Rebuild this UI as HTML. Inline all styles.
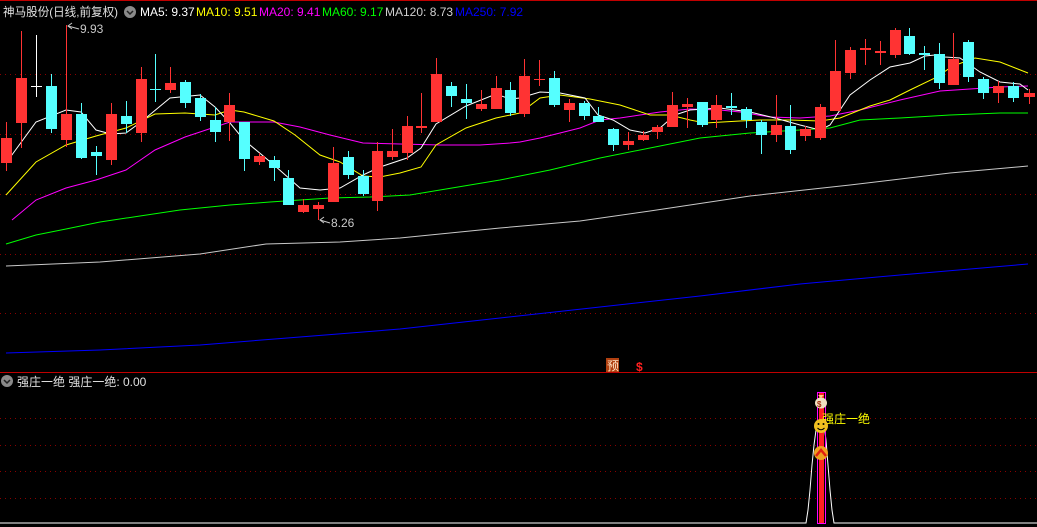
<!DOCTYPE html>
<html><head><meta charset="utf-8"><style>
html,body{margin:0;padding:0;background:#000;width:1037px;height:527px;overflow:hidden}
svg{display:block}
text{font-family:"Liberation Sans","Noto Sans CJK SC",sans-serif}
</style></head><body>
<svg width="1037" height="527" viewBox="0 0 1037 527" xmlns="http://www.w3.org/2000/svg">
<rect width="1037" height="527" fill="#000"/>
<line x1="0" y1="0.5" x2="1037" y2="0.5" stroke="#c00000"/>
<g stroke="#8a0000" stroke-dasharray="1,4">
<line x1="0" y1="74.5" x2="1037" y2="74.5"/><line x1="0" y1="134.5" x2="1037" y2="134.5"/><line x1="0" y1="194.5" x2="1037" y2="194.5"/><line x1="0" y1="254.5" x2="1037" y2="254.5"/><line x1="0" y1="313.5" x2="1037" y2="313.5"/>
<line x1="0" y1="418.5" x2="1037" y2="418.5"/><line x1="0" y1="445.5" x2="1037" y2="445.5"/><line x1="0" y1="471.5" x2="1037" y2="471.5"/><line x1="0" y1="498.5" x2="1037" y2="498.5"/>
</g>
<line x1="0" y1="372.5" x2="1037" y2="372.5" stroke="#c00000"/>

<g fill="none" stroke-width="1">
<polyline stroke="#0000ff" points="6,353 100,350 200,345 300,337 400,329 500,318 600,307 700,296 800,284 900,275 1028,264"/>
<polyline stroke="#c8c8c8" points="6,266 100,262 200,254 266,244 340,242 400,238 500,228 580,221 650,211 750,196 850,185 950,173 1028,166"/>
<polyline stroke="#00ff00" points="6,244 36,235 66,229 100,222 140,216 180,210 230,205 270,202 300,200 330,198 370,197 410,195 440,190 470,185 500,180 520,176 550,170 600,158 650,148 700,138 750,133 800,130 830,128 860,120 900,118 950,115 1000,113 1028,113"/>
<polyline stroke="#ff00ff" points="12,220 36,200 66,188 96,180 126,170 155,150 185,137 215,127 230,122 250,122 274,122 300,127 330,135 363,143 400,144 440,145 480,145 510,143 520,142 540,138 560,133 580,128 600,120 620,118 640,115 660,112 690,109 720,110 740,112 770,117 800,118 830,116 860,110 900,100 940,91 970,89 1000,87 1028,86"/>
<polyline stroke="#ffff00" points="6,195 36,162 66,145 96,136 126,128 155,114 185,113 215,115 230,110 244,112 274,121 295,135 320,155 340,162 363,176 380,177 400,173 421,167 436,145 466,128 496,118 520,113 540,98 560,95 590,99 620,105 650,115 670,115 690,120 705,123 740,121 760,120 790,120 820,121 840,118 870,106 890,100 910,90 935,78 953,66 975,58 1000,62 1028,73"/>
<polyline stroke="#ffffff" points="6,163 36,122 66,110 81,112 96,130 111,134 126,133 141,122 170,98 200,95 215,107 230,123 244,140 274,165 300,188 320,190 340,188 363,175 380,167 407,158 421,148 436,124 466,106 496,94 510,99 520,98 540,92 560,93 585,98 598,115 613,120 630,130 645,133 660,128 675,115 690,110 720,108 750,112 775,118 800,125 820,130 830,125 850,95 870,80 890,67 910,63 925,56 935,55 945,57 960,58 980,72 1000,82 1020,84 1028,90"/>
</g>

<g fill="#ff3333" stroke="#ff3333">
<line x1="6.5" y1="122" x2="6.5" y2="171"/><rect x="1" y="138" width="11" height="25" stroke="none"/>
<line x1="21.5" y1="31" x2="21.5" y2="148"/><rect x="16" y="78" width="11" height="45" stroke="none"/>
<line x1="66.5" y1="25" x2="66.5" y2="147"/><rect x="61" y="114" width="11" height="26" stroke="none"/>
<line x1="111.5" y1="103" x2="111.5" y2="165"/><rect x="106" y="114" width="11" height="46" stroke="none"/>
<line x1="141.5" y1="67" x2="141.5" y2="142"/><rect x="136" y="79" width="11" height="54" stroke="none"/>
<line x1="170.5" y1="67" x2="170.5" y2="93"/><rect x="165" y="83" width="11" height="7" stroke="none"/>
<line x1="229.5" y1="93" x2="229.5" y2="141"/><rect x="224" y="105" width="11" height="17" stroke="none"/>
<line x1="259.5" y1="153" x2="259.5" y2="165"/><rect x="254" y="156" width="11" height="6" stroke="none"/>
<line x1="303.5" y1="199" x2="303.5" y2="213"/><rect x="298" y="205" width="11" height="7" stroke="none"/>
<line x1="318.5" y1="202" x2="318.5" y2="220"/><rect x="313" y="205" width="11" height="4" stroke="none"/>
<line x1="333.5" y1="147" x2="333.5" y2="202"/><rect x="328" y="163" width="11" height="39" stroke="none"/>
<line x1="377.5" y1="142" x2="377.5" y2="211"/><rect x="372" y="151" width="11" height="50" stroke="none"/>
<line x1="392.5" y1="129" x2="392.5" y2="160"/><rect x="387" y="151" width="11" height="6" stroke="none"/>
<line x1="407.5" y1="116" x2="407.5" y2="160"/><rect x="402" y="126" width="11" height="27" stroke="none"/>
<line x1="421.5" y1="93" x2="421.5" y2="133"/><rect x="416" y="126" width="11" height="2" stroke="none"/>
<line x1="436.5" y1="58" x2="436.5" y2="122"/><rect x="431" y="74" width="11" height="48" stroke="none"/>
<line x1="481.5" y1="90" x2="481.5" y2="111"/><rect x="476" y="104" width="11" height="5" stroke="none"/>
<line x1="496.5" y1="76" x2="496.5" y2="109"/><rect x="491" y="88" width="11" height="21" stroke="none"/>
<line x1="524.5" y1="59" x2="524.5" y2="117"/><rect x="519" y="76" width="11" height="38" stroke="none"/>
<line x1="539.5" y1="60" x2="539.5" y2="86"/><rect x="534" y="79" width="11" height="1" stroke="none"/>
<line x1="569.5" y1="99" x2="569.5" y2="122"/><rect x="564" y="103" width="11" height="7" stroke="none"/>
<line x1="628.5" y1="132" x2="628.5" y2="150"/><rect x="623" y="141" width="11" height="4" stroke="none"/>
<line x1="643.5" y1="131" x2="643.5" y2="141"/><rect x="638" y="135" width="11" height="5" stroke="none"/>
<line x1="657.5" y1="125" x2="657.5" y2="139"/><rect x="652" y="127" width="11" height="5" stroke="none"/>
<line x1="672.5" y1="92" x2="672.5" y2="127"/><rect x="667" y="105" width="11" height="22" stroke="none"/>
<line x1="687.5" y1="98" x2="687.5" y2="128"/><rect x="682" y="104" width="11" height="3" stroke="none"/>
<line x1="716.5" y1="95" x2="716.5" y2="128"/><rect x="711" y="105" width="11" height="15" stroke="none"/>
<line x1="776.5" y1="95" x2="776.5" y2="142"/><rect x="771" y="125" width="11" height="10" stroke="none"/>
<line x1="805.5" y1="126" x2="805.5" y2="141"/><rect x="800" y="129" width="11" height="7" stroke="none"/>
<line x1="820.5" y1="104" x2="820.5" y2="140"/><rect x="815" y="107" width="11" height="31" stroke="none"/>
<line x1="835.5" y1="40" x2="835.5" y2="111"/><rect x="830" y="71" width="11" height="40" stroke="none"/>
<line x1="850.5" y1="47" x2="850.5" y2="79"/><rect x="845" y="50" width="11" height="23" stroke="none"/>
<line x1="865.5" y1="39" x2="865.5" y2="65"/><rect x="860" y="48" width="11" height="2" stroke="none"/>
<line x1="880.5" y1="41" x2="880.5" y2="65"/><rect x="875" y="51" width="11" height="2" stroke="none"/>
<line x1="895.5" y1="28" x2="895.5" y2="58"/><rect x="890" y="30" width="11" height="25" stroke="none"/>
<line x1="953.5" y1="33" x2="953.5" y2="85"/><rect x="948" y="59" width="11" height="26" stroke="none"/>
<line x1="998.5" y1="81" x2="998.5" y2="103"/><rect x="993" y="86" width="11" height="7" stroke="none"/>
<line x1="1029.5" y1="89" x2="1029.5" y2="104"/><rect x="1024" y="93" width="11" height="4" stroke="none"/>
</g>
<g fill="#55ffff" stroke="#55ffff">
<line x1="51.5" y1="74" x2="51.5" y2="133"/><rect x="46" y="86" width="11" height="43" stroke="none"/>
<line x1="81.5" y1="103" x2="81.5" y2="159"/><rect x="76" y="114" width="11" height="44" stroke="none"/>
<line x1="96.5" y1="146" x2="96.5" y2="175"/><rect x="91" y="152" width="11" height="4" stroke="none"/>
<line x1="126.5" y1="101" x2="126.5" y2="133"/><rect x="121" y="116" width="11" height="8" stroke="none"/>
<line x1="155.5" y1="54" x2="155.5" y2="102"/><rect x="150" y="89" width="11" height="1" stroke="none"/>
<line x1="185.5" y1="80" x2="185.5" y2="108"/><rect x="180" y="82" width="11" height="21" stroke="none"/>
<line x1="200.5" y1="94" x2="200.5" y2="121"/><rect x="195" y="98" width="11" height="19" stroke="none"/>
<line x1="215.5" y1="107" x2="215.5" y2="142"/><rect x="210" y="120" width="11" height="12" stroke="none"/>
<line x1="244.5" y1="122" x2="244.5" y2="171"/><rect x="239" y="122" width="11" height="37" stroke="none"/>
<line x1="274.5" y1="156" x2="274.5" y2="181"/><rect x="269" y="160" width="11" height="8" stroke="none"/>
<line x1="288.5" y1="170" x2="288.5" y2="205"/><rect x="283" y="178" width="11" height="27" stroke="none"/>
<line x1="348.5" y1="151" x2="348.5" y2="179"/><rect x="343" y="157" width="11" height="18" stroke="none"/>
<line x1="363.5" y1="170" x2="363.5" y2="196"/><rect x="358" y="176" width="11" height="18" stroke="none"/>
<line x1="451.5" y1="82" x2="451.5" y2="107"/><rect x="446" y="86" width="11" height="10" stroke="none"/>
<line x1="466.5" y1="84" x2="466.5" y2="119"/><rect x="461" y="99" width="11" height="4" stroke="none"/>
<line x1="510.5" y1="82" x2="510.5" y2="116"/><rect x="505" y="90" width="11" height="23" stroke="none"/>
<line x1="554.5" y1="71" x2="554.5" y2="107"/><rect x="549" y="78" width="11" height="27" stroke="none"/>
<line x1="584.5" y1="101" x2="584.5" y2="120"/><rect x="579" y="103" width="11" height="13" stroke="none"/>
<line x1="598.5" y1="107" x2="598.5" y2="122"/><rect x="593" y="116" width="11" height="6" stroke="none"/>
<line x1="613.5" y1="128" x2="613.5" y2="151"/><rect x="608" y="129" width="11" height="16" stroke="none"/>
<line x1="702.5" y1="102" x2="702.5" y2="127"/><rect x="697" y="102" width="11" height="23" stroke="none"/>
<line x1="731.5" y1="93" x2="731.5" y2="115"/><rect x="726" y="106" width="11" height="2" stroke="none"/>
<line x1="746.5" y1="107" x2="746.5" y2="128"/><rect x="741" y="109" width="11" height="11" stroke="none"/>
<line x1="761.5" y1="120" x2="761.5" y2="154"/><rect x="756" y="122" width="11" height="13" stroke="none"/>
<line x1="790.5" y1="105" x2="790.5" y2="154"/><rect x="785" y="126" width="11" height="24" stroke="none"/>
<line x1="909.5" y1="28" x2="909.5" y2="55"/><rect x="904" y="36" width="11" height="18" stroke="none"/>
<line x1="924.5" y1="46" x2="924.5" y2="70"/><rect x="919" y="53" width="11" height="2" stroke="none"/>
<line x1="939.5" y1="43" x2="939.5" y2="89"/><rect x="934" y="54" width="11" height="29" stroke="none"/>
<line x1="968.5" y1="40" x2="968.5" y2="82"/><rect x="963" y="42" width="11" height="35" stroke="none"/>
<line x1="983.5" y1="77" x2="983.5" y2="99"/><rect x="978" y="79" width="11" height="14" stroke="none"/>
<line x1="1013.5" y1="82" x2="1013.5" y2="102"/><rect x="1008" y="86" width="11" height="12" stroke="none"/>
</g>
<g stroke="#ffffff"><line x1="36.5" y1="35" x2="36.5" y2="97"/><line x1="31" y1="86.5" x2="42" y2="86.5"/></g>

<g stroke="#c8c8c8" fill="none"><polyline points="72,29 68,26 72,23"/><line x1="68" y1="26" x2="79" y2="29"/>
<polyline points="324,223 320,220 324,217"/><line x1="320" y1="220" x2="330" y2="223"/></g>
<text x="80" y="33" font-size="12" fill="#c8c8c8">9.93</text>
<text x="331" y="227" font-size="12" fill="#c8c8c8">8.26</text>

<text x="3" y="16" font-size="12" fill="#e0e0e0" textLength="115" lengthAdjust="spacingAndGlyphs">神马股份(日线,前复权)</text>
<circle cx="130" cy="12" r="6" fill="#8a8a8a"/><polyline points="127,11 130,14 133,11" fill="none" stroke="#222" stroke-width="1.5"/>
<text y="16" font-size="12"><tspan x="140" fill="#ffffff">MA5: 9.37</tspan><tspan x="196" fill="#ffff00">MA10: 9.51</tspan><tspan x="259" fill="#ff00ff">MA20: 9.41</tspan><tspan x="322" fill="#00ff00">MA60: 9.17</tspan><tspan x="385" fill="#d0d0d0">MA120: 8.73</tspan><tspan x="455" fill="#0000ff">MA250: 7.92</tspan></text>

<rect x="606" y="358" width="13" height="14" fill="#b04010"/>
<text x="607" y="370" font-size="12" fill="#ffe0c0">预</text>
<text x="636" y="371" font-size="12" font-weight="bold" fill="#ff2020">$</text>

<circle cx="7" cy="381" r="6" fill="#8a8a8a"/><polyline points="4,380 7,383 10,380" fill="none" stroke="#222" stroke-width="1.5"/>
<text x="17" y="386" font-size="12" fill="#e0e0e0">强庄一绝 强庄一绝: 0.00</text>

<polyline fill="none" stroke="#ffffff" points="0,523 806,523 808,510 810,490 812,465 814,445 816,430 818,425 824,425 826,440 828,465 830,490 832,510 834,523 1037,523"/>
<rect x="817.5" y="392.5" width="8" height="131" fill="none" stroke="#ff00ff"/>
<rect x="819" y="393" width="5" height="130" fill="#ff2020"/>
<ellipse cx="821" cy="403" rx="6" ry="5.5" fill="#f0e0c0"/><text x="817" y="407" font-size="8" font-weight="bold" fill="#a03010">$</text>
<path d="M818,395 L824,395 L821,398 Z" fill="#ffd080"/>
<text x="822" y="423" font-size="12" fill="#ffff00">强庄一绝</text>
<circle cx="821" cy="426" r="7" fill="#f0c020"/><circle cx="818.5" cy="424" r="1" fill="#000"/><circle cx="823.5" cy="424" r="1" fill="#000"/><path d="M817.5,428 Q821,431.5 824.5,428" fill="none" stroke="#000"/>
<circle cx="821" cy="453" r="7" fill="#f0a020"/><polyline points="816,456 821,450 826,456" fill="none" stroke="#e02010" stroke-width="2.5"/>
</svg>
</body></html>
